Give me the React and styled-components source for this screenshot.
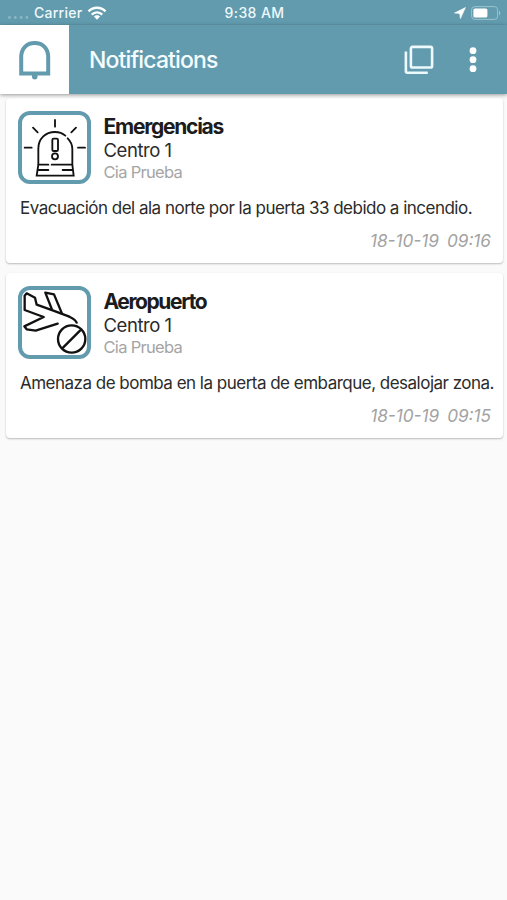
import React from 'react';
import styled, { createGlobalStyle } from 'styled-components';

const TEAL = '#629bae';

const GlobalStyle = createGlobalStyle`
    * {
        box-sizing: border-box;
    }
    body {
        margin: 0;
        background: #fafafa;
        font-family: Inter, 'Liberation Sans', sans-serif;
        color: #2b2b2b;
    }
    svg {
        display: block;
    }
`;

const Screen = styled.div`
    min-height: 900px;
    overflow: hidden;
    background: #fafafa;
`;

const StatusBar = styled.div`
    display: grid;
    grid-template-columns: 1fr auto 1fr;
    align-items: center;
    height: 25px;
    padding: 0 6px 0 8px;
    background: ${TEAL};
    color: #eef8fb;
    font-size: 14px;
    font-weight: 500;
    line-height: 25px;
`;

const StatusGroup = styled.div`
    display: flex;
    align-items: center;
    justify-content: ${({ $end }) => ($end ? 'flex-end' : 'flex-start')};
    gap: 5px;
`;

const Carrier = styled.span`
    letter-spacing: 0.25px;
`;

const Clock = styled.span`
    letter-spacing: 0.4px;
`;

const Header = styled.header`
    position: relative;
    display: flex;
    align-items: center;
    height: 69px;
    background: ${TEAL};
    box-shadow: 0 1px 4px rgba(0, 0, 0, 0.4);
`;

const BellBox = styled.div`
    display: flex;
    align-items: center;
    justify-content: center;
    width: 69px;
    height: 69px;
    background: #fff;
`;

const Title = styled.h1`
    flex: 1;
    margin: 0 0 0 20px;
    color: #f5fcff;
    font-size: 23px;
    font-weight: 500;
    letter-spacing: -0.87px;
    line-height: 28px;
`;

const Actions = styled.div`
    display: flex;
    align-items: center;
    gap: 35px;
    padding-right: 30px;
`;

const List = styled.main`
    display: flex;
    flex-direction: column;
    gap: 9.5px;
    padding: 4px 4px 0 6px;
`;

const Card = styled.article`
    height: 165px;
    padding: 13px 12px 0;
    background: #fff;
    border-radius: 4px;
    box-shadow: 0 1px 2px rgba(0, 0, 0, 0.26);
`;

const CardTop = styled.div`
    display: flex;
    gap: 12.5px;
`;

const IconFrame = styled.div`
    flex: none;
    width: 73px;
    height: 73px;
    border: 4px solid ${TEAL};
    border-radius: 12px;
`;

const Name = styled.h2`
    margin: 3px 0 0;
    color: #1c1c1c;
    font-size: 21px;
    font-weight: 700;
    letter-spacing: ${({ $spacing }) => $spacing}px;
    line-height: 25px;
`;

const Center = styled.div`
    font-size: 18.5px;
    letter-spacing: -0.45px;
    line-height: 23px;
`;

const Company = styled.div`
    color: #a5a5a5;
    font-size: 16.5px;
    letter-spacing: -0.7px;
    line-height: 20px;
`;

const Message = styled.p`
    margin: 13px 0 0 2px;
    font-size: 17px;
    letter-spacing: -0.51px;
    line-height: 22px;
    white-space: nowrap;
`;

const Stamp = styled.div`
    display: flex;
    justify-content: flex-end;
    gap: 8px;
    margin-top: 11px;
    color: #a3a3a3;
    font-size: 17.2px;
    font-style: italic;
    line-height: 22px;
`;

const WifiIcon = () => (
    <svg width="20" height="16" viewBox="0 0 20 16" fill="none" stroke="#fff" strokeWidth="2.3">
        <path d="M1.5 6.4C6.3 1.5 13.7 1.5 18.5 6.4" />
        <path d="M4.7 9.6C7.8 6.5 12.2 6.5 15.3 9.6" />
        <path d="M10 14.7 6.9 11.6C8.5 9.9 11.5 9.9 13.1 11.6Z" fill="#fff" stroke="none" />
    </svg>
);

const SignalDots = () => (
    <svg width="21" height="16" viewBox="0 0 21 16" fill="#8cb7c6">
        <circle cx="1.5" cy="12.5" r="1.4" />
        <circle cx="7.3" cy="12.5" r="1.4" />
        <circle cx="13.1" cy="12.5" r="1.4" />
        <circle cx="18.9" cy="12.5" r="1.4" />
    </svg>
);

const LocationIcon = () => (
    <svg width="12" height="12" viewBox="0 0 12 12" fill="#fff" stroke="#fff" strokeWidth="0.6">
        <path d="M11.5.5.5 6 5.7 6.5 6.4 11.6Z" />
    </svg>
);

const BatteryIcon = () => (
    <svg width="30" height="14" viewBox="0 0 30 14">
        <rect x="0.6" y="0.6" width="26" height="12.8" rx="3.2" fill="none" stroke="#9cc3d0" />
        <rect x="2.4" y="2.4" width="14" height="9.2" rx="1.6" fill="#fff" />
        <path d="M28 4.7C29.8 5.5 29.8 8.5 28 9.3Z" fill="#9cc3d0" />
    </svg>
);

const BellIcon = () => (
    <svg width="33" height="40" viewBox="0 0 33 40">
        <path
            d="M3.2 33.4V17.2C3.2 8.5 8.6 3 16.7 3S30.2 8.5 30.2 17.2V33.4Z"
            fill="none"
            stroke={TEAL}
            strokeWidth="4"
        />
        <path d="M14 34H19.5V36.8A2.75 2.75 0 0 1 14 36.8Z" fill={TEAL} />
    </svg>
);

const CopyIcon = () => (
    <svg width="30" height="30" viewBox="0 0 30 30" fill="none" stroke="#edf9fd" strokeWidth="2.6">
        <rect x="6.9" y="1.9" width="21.2" height="20.6" rx="1.6" />
        <path d="M1.9 6.4V26.3Q1.9 27.7 3.3 27.7H23.8" />
    </svg>
);

const MoreIcon = () => (
    <svg width="8" height="26" viewBox="0 0 8 26" fill="#fff">
        <circle cx="4" cy="3.7" r="3.4" />
        <circle cx="4" cy="12.7" r="3.4" />
        <circle cx="4" cy="21.7" r="3.4" />
    </svg>
);

const SirenIcon = () => (
    <svg
        width="65"
        height="65"
        viewBox="36 29 195 195"
        fill="none"
        stroke="#111"
        strokeWidth="5.5"
        strokeLinecap="round"
    >
        <path d="M135 44V64M69 67 83 81M198 67 184 81M44 127H65M204 127H225" />
        <path d="M85 176V130C85 101 106 80 135 80C148 80 158 84 166 91M173 99C182 108 187 119 187 131V176" />
        <rect x="127" y="100" width="17" height="37" rx="4" />
        <circle cx="135" cy="153" r="9" />
        <path d="M85 178H115M125 178H187M85 178 80 211H191L187 178M84 194H115M158 194H187" />
    </svg>
);

const PlaneIcon = () => (
    <svg
        width="65"
        height="65"
        viewBox="36 29 195 195"
        fill="none"
        stroke="#111"
        strokeWidth="7"
        strokeLinecap="round"
        strokeLinejoin="round"
    >
        <path d="M200 127C196 117 188 114 176 108L128 90 80 73 75 52 50 39 44 46V89L101 110 43 138 50 147 77 151 143 130" />
        <path d="M126 88 106 37 132 42 156 100" />
        <circle cx="185" cy="176" r="41" />
        <path d="M159 202 210 151" />
    </svg>
);

const notifications = [
    {
        name: 'Emergencias',
        nameSpacing: -1.25,
        icon: <SirenIcon />,
        message: 'Evacuación del ala norte por la puerta 33 debido a incendio.',
        time: '09:16',
    },
    {
        name: 'Aeropuerto',
        nameSpacing: -1.4,
        icon: <PlaneIcon />,
        message: 'Amenaza de bomba en la puerta de embarque, desalojar zona.',
        time: '09:15',
    },
];

export default function App() {
    return (
        <>
            <GlobalStyle />
            <Screen>
                <StatusBar>
                    <StatusGroup>
                        <SignalDots />
                        <Carrier>Carrier</Carrier>
                        <WifiIcon />
                    </StatusGroup>
                    <Clock>9:38 AM</Clock>
                    <StatusGroup $end>
                        <LocationIcon />
                        <BatteryIcon />
                    </StatusGroup>
                </StatusBar>
                <Header>
                    <BellBox>
                        <BellIcon />
                    </BellBox>
                    <Title>Notifications</Title>
                    <Actions>
                        <CopyIcon />
                        <MoreIcon />
                    </Actions>
                </Header>
                <List>
                    {notifications.map((item) => (
                        <Card key={item.name}>
                            <CardTop>
                                <IconFrame>{item.icon}</IconFrame>
                                <div>
                                    <Name $spacing={item.nameSpacing}>{item.name}</Name>
                                    <Center>Centro 1</Center>
                                    <Company>Cia Prueba</Company>
                                </div>
                            </CardTop>
                            <Message>{item.message}</Message>
                            <Stamp>
                                <span>18-10-19</span>
                                <span>{item.time}</span>
                            </Stamp>
                        </Card>
                    ))}
                </List>
            </Screen>
        </>
    );
}
